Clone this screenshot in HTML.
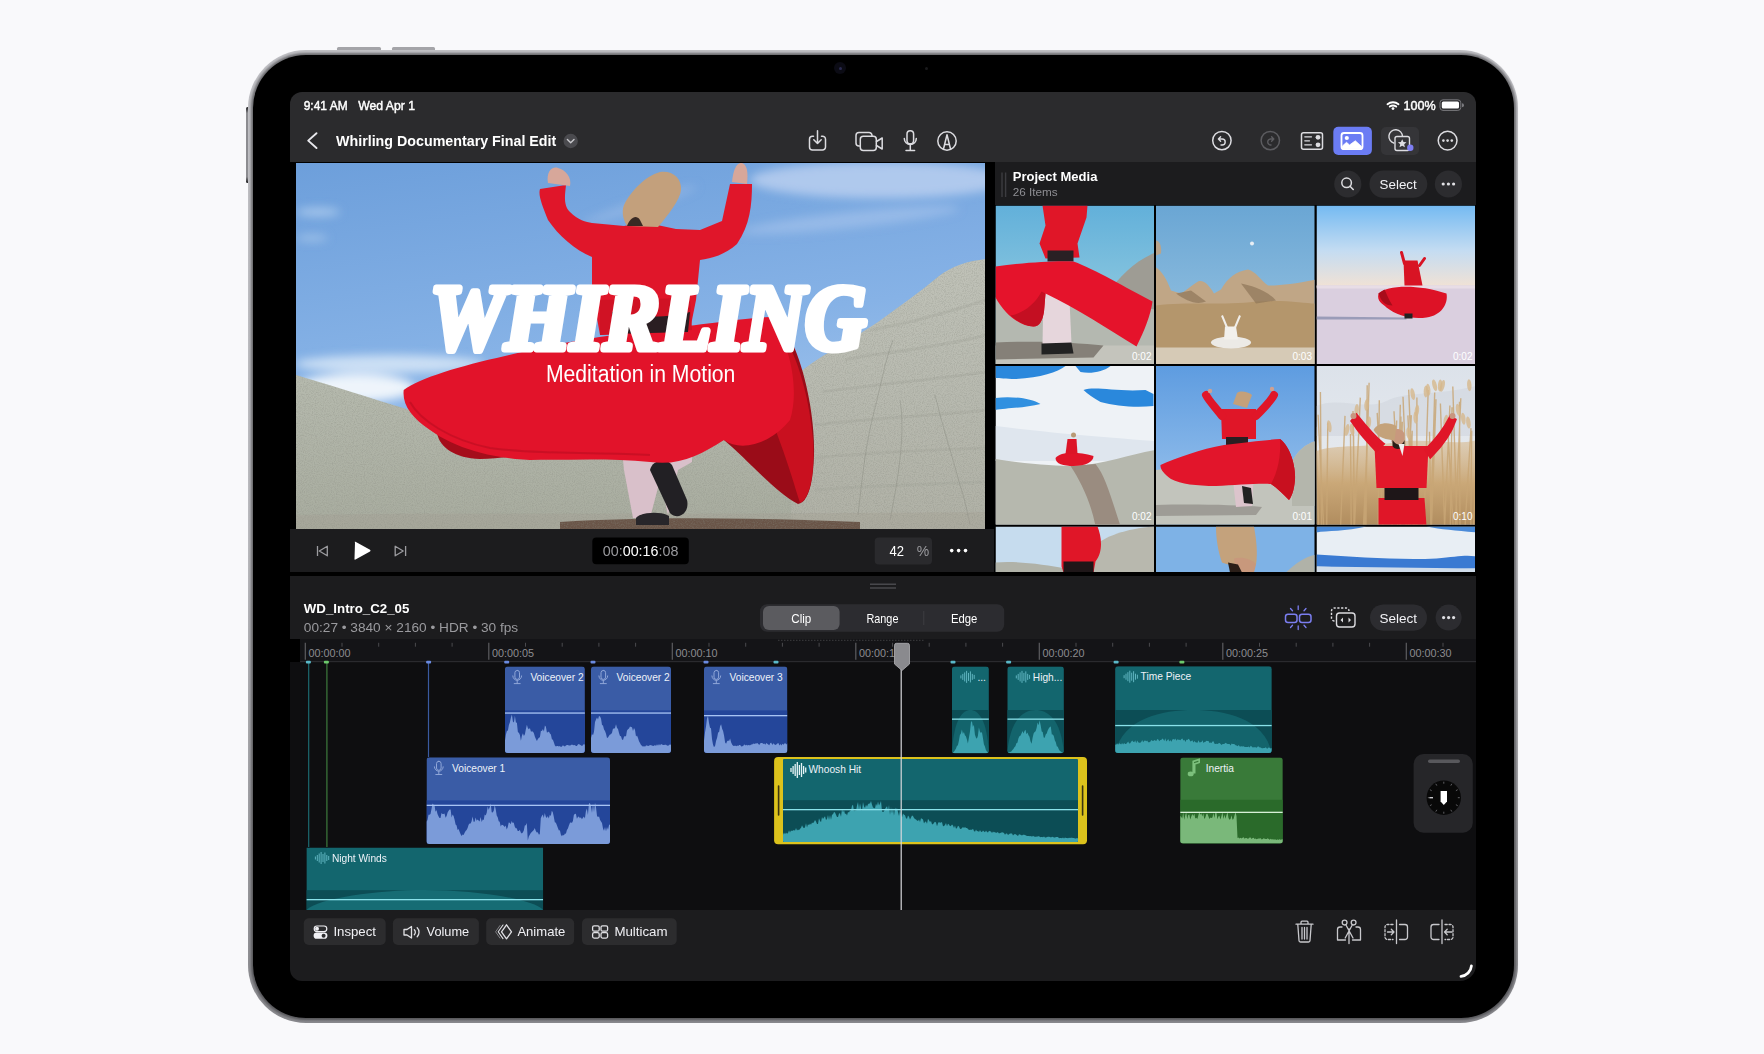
<!DOCTYPE html>
<html><head><meta charset="utf-8">
<style>
*{margin:0;padding:0;box-sizing:border-box}
html,body{width:1764px;height:1054px;overflow:hidden;background:#f9f9fb;font-family:"Liberation Sans",sans-serif;}
.a{position:absolute}
#frame{left:248px;top:49.5px;width:1270px;height:973px;border-radius:58px;background:linear-gradient(#c2c2c6,#bcbcc0 50%,#8a8a8e);}
#bezel{left:253px;top:54.5px;width:1260.5px;height:963.3px;border-radius:53px;background:#000;box-shadow:0 0 2.5px 1.5px rgba(50,50,54,0.6);}
#screen{left:290px;top:91.5px;width:1186px;height:889.5px;border-radius:12px 12px 16px 12px;background:#000;overflow:hidden}

</style></head><body>
<div class="a" style="left:337px;top:47px;width:44px;height:4px;border-radius:1.5px;background:#a4a4a8"></div>
<div class="a" style="left:392px;top:47px;width:43px;height:4px;border-radius:1.5px;background:#a4a4a8"></div>
<div class="a" style="left:246px;top:107.3px;width:3px;height:76px;border-radius:1.5px;background:linear-gradient(#1a1a1c,#8c8c90 8%,#8c8c90 92%,#1a1a1c)"></div>
<div id="frame" class="a"></div>
<div id="bezel" class="a"></div>
<div class="a" style="left:834px;top:62px;width:12px;height:12px;border-radius:6px;background:#0b0b14"></div>
<div class="a" style="left:838.5px;top:66.5px;width:3px;height:3px;border-radius:2px;background:#2a2a50"></div>
<div class="a" style="left:924.5px;top:67px;width:3px;height:3px;border-radius:2px;background:#1a1a1c"></div>

<div id="screen" class="a">
  <div class="a" style="left:0;top:0;width:1186px;height:70.5px;background:#2b2b2d"></div>
  <div class="a" style="left:0;top:437.5px;width:704px;height:43px;background:#1c1c1e"></div>
  <div class="a" style="left:705px;top:70.5px;width:481px;height:43px;background:#1c1c1e"></div>
  <div class="a" style="left:0;top:484.5px;width:1186px;height:63px;background:#1c1c1e"></div>
  <div class="a" style="left:10px;top:547.5px;width:1176px;height:23px;background:#141417"></div>
  <div class="a" style="left:0;top:570.5px;width:1186px;height:248px;background:#0e0e10"></div>
  <div class="a" style="left:0;top:818.5px;width:1186px;height:71px;background:#1c1c1e"></div>
</div>

<svg class="a" style="left:0;top:0" width="1764" height="1054" viewBox="0 0 1764 1054" font-family="Liberation Sans, sans-serif">
<!--PHOTOS-->
<g id="preview">
  <defs>
    <clipPath id="hillclip"><path d="M296,375 C330,385 370,398 410,410 C520,432 640,440 720,438 L800,420 L800,372 C820,356 845,344 878,322 C900,306 920,292 939,276 C952,266 968,261 986,259 L986,529 L296,529 Z"/></clipPath>
    <clipPath id="cpv"><rect x="296" y="163" width="689" height="366"/></clipPath>
    <filter id="noise" x="0" y="0" width="100%" height="100%"><feTurbulence type="fractalNoise" baseFrequency="0.9" numOctaves="2" seed="4"/><feColorMatrix type="matrix" values="0 0 0 0 0.25  0 0 0 0 0.26  0 0 0 0 0.22  0 0 0 -2.2 1.3"/><feComposite operator="in" in2="SourceGraphic"/></filter>
    <filter id="blur4" x="-50%" y="-50%" width="200%" height="200%"><feGaussianBlur stdDeviation="5"/></filter>
    <linearGradient id="skyv" x1="0" y1="0" x2="0.25" y2="1">
      <stop offset="0" stop-color="#6d9fdb"/>
      <stop offset="0.55" stop-color="#86b2e6"/>
      <stop offset="1" stop-color="#a9c9ef"/>
    </linearGradient>
    <linearGradient id="hillL" x1="0" y1="0" x2="0" y2="1">
      <stop offset="0" stop-color="#b6baae"/>
      <stop offset="1" stop-color="#a8ac9f"/>
    </linearGradient>
    <linearGradient id="hillR" x1="0" y1="0" x2="0" y2="1">
      <stop offset="0" stop-color="#c0c2b8"/>
      <stop offset="0.5" stop-color="#b8bab0"/>
      <stop offset="1" stop-color="#b0b1a6"/>
    </linearGradient>
  </defs>
  <g clip-path="url(#cpv)">
    <rect x="296" y="163" width="689" height="366" fill="url(#skyv)"/>
    <!-- clouds -->
    <g filter="url(#blur4)">
    <ellipse cx="390" cy="364" rx="95" ry="9" fill="#d4e4f6" opacity="0.9"/>
    <ellipse cx="355" cy="388" rx="60" ry="14" fill="#eef4fb"/>
    <ellipse cx="318" cy="212" rx="22" ry="4" fill="#b8d2f0" opacity="0.8"/>
    <ellipse cx="312" cy="238" rx="16" ry="3" fill="#b8d2f0" opacity="0.7"/>
    <ellipse cx="880" cy="180" rx="130" ry="18" fill="#c2d4f2" opacity="0.75"/>
    <ellipse cx="850" cy="220" rx="110" ry="8" fill="#a8c4ec" opacity="0.6" transform="rotate(-6 850 220)"/>
    <ellipse cx="640" cy="205" rx="60" ry="5" fill="#a6c2ea" opacity="0.5" transform="rotate(-18 640 205)"/>
    </g>
    <!-- left hill -->
    <path d="M296,375 C330,385 370,398 410,410 C520,432 640,440 720,438 L810,420 L810,529 L296,529 Z" fill="url(#hillL)"/>
    <!-- right hill -->
    <path d="M790,529 L800,372 C820,356 845,344 878,322 C900,306 920,292 939,276 C952,266 968,261 986,259 L986,529 Z" fill="url(#hillR)"/>
    <g stroke="#a2a49a" stroke-width="3" fill="none" opacity="0.3">
      <path d="M870,330 C900,325 930,318 986,300"/>
      <path d="M845,360 C880,352 930,350 986,335"/>
      <path d="M822,392 C870,385 930,380 986,372"/>
      <path d="M815,425 C870,418 930,416 986,410"/>
      <path d="M815,458 C870,452 930,450 986,448"/>
      <path d="M815,490 C870,486 930,484 986,482"/>
    </g>
    <g stroke="#7c7e74" stroke-width="1" fill="none" opacity="0.35">
      <path d="M893,340 C885,360 880,390 872,420 C865,450 862,480 858,515"/>
      <path d="M935,395 C942,425 952,455 960,485 C965,500 968,515 970,525"/>
      <path d="M900,400 C905,430 900,470 890,520"/>
    </g>
    <!-- ground -->
    <path d="M296,515 C450,512 700,515 985,512 L985,529 L296,529 Z" fill="#a39d92" opacity="0.35"/>
    <path d="M560,522 C650,516 760,518 860,522 L860,529 L560,529 Z" fill="#6a5548"/>
    <rect x="296" y="255" width="689" height="274" fill="#fff" filter="url(#noise)" opacity="0.35" clip-path="url(#hillclip)"/>
    <!-- back skirt right lobe (dark) -->
    <path d="M724,440 C750,462 775,492 798,504 C808,502 813,485 814,455 C815,420 806,370 790,338 C782,325 775,318 769,317 C745,340 725,370 700,400 Z" fill="#9a0c18"/>
    <path d="M769,317 C792,338 808,385 813,440 C815,475 810,498 800,503 C790,470 775,420 752,380 Z" fill="#c9101f"/>
    <!-- legs -->
    <path d="M619,420 L692,420 L692,462 L678,470 L668,515 L660,480 L650,518 L633,518 L624,470 Z" fill="#d9c0ca"/>
    <path d="M650,470 C652,460 666,457 672,465 L687,500 C690,513 678,521 670,513 Z" fill="#222024"/>
    <path d="M636,518 C640,512 662,511 669,516 L669,525 L636,525 Z" fill="#28262a"/>
    <!-- underside dark lobe left -->
    <path d="M437,433 C440,448 455,458 480,459 C500,459 520,455 540,452 L520,440 Z" fill="#a50d1b"/>
    <!-- front skirt -->
    <path d="M403.7,390 C420,378 460,366 505,356 C560,342 620,333 680,327 C720,322 750,318 769,317 C790,340 800,390 790,420 C770,445 740,452 724,440 C700,455 680,466 650,462 C610,458 570,460 530,460 C490,458 455,448 430,430 C412,418 402,405 403.7,390 Z" fill="#e2132a"/>
    <path d="M410,402 C420,420 450,440 490,448 C540,455 600,452 650,455" fill="none" stroke="#c00e22" stroke-width="2" opacity="0.7"/>
    <!-- torso and arms -->
    <path d="M592,223 L624,226 L643,222 L676,229 L700,230 L722,221 L730,184 L752,184 C752,205 750,225 737,244 C725,255 712,258 700,260 L696,300 L690,330 L600,335 L592,290 L592,257 C575,250 558,235 548,220 C542,205 538,195 540,189 L566,185 C565,195 563,205 570,212 C578,220 586,222 592,223 Z" fill="#e0162a"/>
    <path d="M600,300 L690,298 L692,330 L600,335 Z" fill="#d01224" />
    <path d="M612,312 C640,318 670,318 690,312 L688,332 L612,334 Z" fill="#2a1e22"/>
    <!-- hands -->
    <path d="M548,183 C546,172 552,166 558,168 C566,170 572,178 570,186 Z" fill="#d7a79a"/>
    <path d="M732,182 C733,170 737,162 742,163 C748,165 748,175 747,184 Z" fill="#d7a79a"/>
    <!-- hat -->
    <path d="M624,205 C630,192 645,176 660,172 C672,170 682,178 681,190 C680,200 668,215 658,227 L627,226 C622,218 622,210 624,205 Z" fill="#c3a07c"/>
    <path d="M627,226 C630,218 636,214 640,220 L643,226 Z" fill="#3a2a24"/>
  </g>
  <!-- title -->
  <text x="430" y="349" font-family="Liberation Serif" font-weight="bold" font-style="italic" font-size="94" fill="#fff" stroke="#fff" stroke-width="7" stroke-linejoin="round" textLength="436" lengthAdjust="spacingAndGlyphs">WHIRLING</text>
  <text x="545.9" y="382.2" font-size="23.5" fill="#fff" textLength="189.5" lengthAdjust="spacingAndGlyphs">Meditation in Motion</text>
</g>

<g id="thumbs">
  <defs>
    <clipPath id="ct1"><rect x="0" y="0" width="158.5" height="158.5"/></clipPath>
    <clipPath id="ct2"><rect x="0" y="0" width="158.5" height="158.5"/></clipPath>
    <clipPath id="ct3"><rect x="0" y="0" width="158.5" height="158.5"/></clipPath>
    <clipPath id="ct4"><rect x="0" y="0" width="158.5" height="158.5"/></clipPath>
    <clipPath id="ct5"><rect x="0" y="0" width="158.5" height="158.5"/></clipPath>
    <clipPath id="ct6"><rect x="0" y="0" width="158.5" height="158.5"/></clipPath>
    <clipPath id="ct7"><rect x="0" y="0" width="158.5" height="45.5"/></clipPath>
    <clipPath id="ct8"><rect x="0" y="0" width="158.5" height="45.5"/></clipPath>
    <clipPath id="ct9"><rect x="0" y="0" width="158.5" height="45.5"/></clipPath>
    <linearGradient id="sk1" x1="0" y1="0" x2="0" y2="1"><stop offset="0" stop-color="#62b0da"/><stop offset="1" stop-color="#a6d6e2"/></linearGradient>
    <linearGradient id="sk2" x1="0" y1="0" x2="0" y2="1"><stop offset="0" stop-color="#6aa6d4"/><stop offset="1" stop-color="#9cc6e2"/></linearGradient>
    <linearGradient id="sk3" x1="0" y1="0" x2="0" y2="1"><stop offset="0" stop-color="#74baf2"/><stop offset="0.55" stop-color="#c4dcf2"/><stop offset="1" stop-color="#f2e2d4"/></linearGradient>
    <linearGradient id="sk5" x1="0" y1="0" x2="0" y2="1"><stop offset="0" stop-color="#5e9ce0"/><stop offset="1" stop-color="#a2c8ee"/></linearGradient>
    <linearGradient id="sk6" x1="0" y1="0" x2="0" y2="1"><stop offset="0" stop-color="#dce2ea"/><stop offset="1" stop-color="#eceef0"/></linearGradient>
    <linearGradient id="reed" x1="0" y1="0" x2="0" y2="1"><stop offset="0" stop-color="#d8bc94" stop-opacity="0.6"/><stop offset="0.5" stop-color="#caa878"/><stop offset="1" stop-color="#b08c5e"/></linearGradient>
  </defs>
  <!-- T1 -->
  <g clip-path="url(#ct1)" transform="translate(995.5,205.5)">
    <rect width="160" height="160" fill="url(#sk1)"/>
    <path d="M110,90 C125,70 140,55 160,47 L160,160 L110,160 Z" fill="#9e9c94"/>
    <path d="M0,92 C40,94 90,98 160,104 L160,160 L0,160 Z" fill="#b4b8b0"/>
    <path d="M0,140 L160,140 L160,160 L0,160 Z" fill="#c4c4bc"/>
    <path d="M0,137 C40,135 80,137 108,140 L98,152 L0,154 Z" fill="#858078"/>
    <path d="M47,0 L92,0 L91,12 L82,38 L84,52 L50,53 L44,38 L50,20 Z" fill="#e01628"/>
    <path d="M52,45 L78,45 L78,56 L52,56 Z" fill="#2a2024"/>
    <path d="M48,86 L74,95 L76,138 L47,139 Z" fill="#e6d6dc"/>
    <path d="M46,138 L76,137 L78,148 L46,149 Z" fill="#222"/>
    <path d="M0,61 C30,57 60,55 78,56 C100,64 130,82 157,96 C155,110 149,125 141,141 C115,125 80,102 50,88 L48.5,106 C47,115 44,121 38,121 C25,121 10,110 0,92 Z" fill="#e5132b"/>
    <path d="M50,88 L48.5,106 C47,115 44,121 38,121 C30,121 22,116 15,110 C28,108 40,98 46,86 Z" fill="#c40f22"/>
    <text x="156" y="154" font-size="10" fill="#fff" text-anchor="end">0:02</text>
  </g>
  <!-- T2 -->
  <g clip-path="url(#ct2)" transform="translate(1156,205.5)">
    <rect width="160" height="160" fill="url(#sk2)"/>
    <circle cx="96" cy="38" r="2" fill="#e8eef4"/>
    <path d="M0,35 C3,35 6,40 5,48 L0,50 Z" fill="#b8a48c"/>
    <path d="M0,62 C5,65 10,72 15,85 L25,88 C30,85 35,80 42,76 C48,74 53,80 58,88 L65,84 C72,72 80,66 92,64 C100,66 105,75 112,80 C125,80 140,78 160,74 L160,160 L0,160 Z" fill="#c0a686"/>
    <path d="M0,100 C30,96 70,100 100,96 C130,94 150,98 160,98 L160,148 L0,148 Z" fill="#b4966c"/>
    <path d="M0,142 L160,142 L160,160 L0,160 Z" fill="#d6cab6"/>
    <path d="M85,78 C95,80 110,84 120,95 L100,98 Z M20,88 C30,95 40,100 50,96 L35,85 Z" fill="#8e7658" opacity="0.7"/>
    <ellipse cx="75" cy="137" rx="20" ry="6" fill="#eceae6"/>
    <path d="M69,121 L80,121 L82,134 L68,134 Z" fill="#f2f0ec"/>
    <path d="M66,110 L71,122 M84,110 L79,122" stroke="#f0eeea" stroke-width="2"/>
    <text x="156" y="154" font-size="10" fill="#fff" text-anchor="end">0:03</text>
  </g>
  <!-- T3 -->
  <g clip-path="url(#ct3)" transform="translate(1316.5,205.5)">
    <rect width="160" height="82" fill="url(#sk3)"/>
    <rect y="80" width="160" height="80" fill="#dacfdf"/>
    <rect y="80" width="160" height="3" fill="#e8dde6"/>
    <path d="M0,111 L90,112 L90,114 L0,114 Z" fill="#9a9cb8"/>
    <path d="M87,55 L101,55 L106,80 L88,80 Z" fill="#d81424"/>
    <path d="M88,58 L85,47 M103,60 L108,53" stroke="#d81424" stroke-width="3" stroke-linecap="round"/>
    <path d="M62,88 C70,80 100,78 130,88 C132,98 125,110 110,112 C95,114 80,110 70,102 C66,98 60,96 62,88 Z" fill="#dd1226"/>
    <path d="M62,88 C65,96 68,100 76,100 C72,94 70,88 68,84 Z" fill="#a80c1a"/>
    <path d="M88,108 L96,108 L96,113 L88,113 Z" fill="#222"/>
    <text x="156" y="154" font-size="10" fill="#fff" text-anchor="end">0:02</text>
  </g>
  <!-- T4 -->
  <g clip-path="url(#ct4)" transform="translate(995.5,366)">
    <rect width="160" height="160" fill="#eef2f6"/>
    <path d="M0,0 L70,0 C62,6 45,12 20,13 C10,13 4,12 0,12 Z M80,0 L115,0 C108,6 95,8 85,6 Z" fill="#2b88dc"/>
    <path d="M0,32 C15,30 35,32 45,38 C30,42 10,42 0,44 Z" fill="#3090e0"/>
    <path d="M88,24 C100,20 120,26 150,24 L158,28 L158,40 C140,42 120,40 105,36 C98,32 92,28 88,24 Z" fill="#2a88dc"/>
    <path d="M0,60 C40,65 90,70 160,75 L160,95 L0,95 Z" fill="#dfe6ee"/>
    <path d="M0,93 C30,98 60,100 80,100 C110,98 135,88 160,84 L160,160 L0,160 Z" fill="#b6b8ae"/>
    <path d="M75,100 C85,115 95,135 100,160 L125,160 C115,130 110,110 100,98 Z" fill="#9a8c80"/>
    <path d="M60,92 C65,86 80,85 98,90 C98,96 90,100 78,100 C68,100 60,98 60,92 Z" fill="#e01428"/>
    <path d="M72,73 L81,73 L82,88 L70,88 Z" fill="#dc1426"/>
    <circle cx="78" cy="69" r="2.5" fill="#b89a74"/>
    <text x="156" y="154" font-size="10" fill="#fff" text-anchor="end">0:02</text>
  </g>
  <!-- T5 -->
  <g clip-path="url(#ct5)" transform="translate(1156,366)">
    <rect width="160" height="160" fill="url(#sk5)"/>
    <path d="M0,104 C40,100 100,104 136,96 C142,84 150,78 160,75 L160,160 L0,160 Z" fill="#c2c4bc"/>
    <path d="M136,96 C142,84 150,78 160,75 L160,140 L136,140 Z" fill="#b4b6ac"/>
    <path d="M0,139 C40,138 80,139 106,141 L100,149 L0,150 Z" fill="#8e8c86" opacity="0.7"/>
    <path d="M76,106 L98,106 L96,140 L80,141 Z" fill="#dcc4cc"/>
    <path d="M86,120 L95,122 L97,138 L88,137 Z" fill="#222"/>
    <path d="M65,43 L100,43 L100,73 L66,73 Z" fill="#e01628"/>
    <path d="M66,50 C60,42 53,35 50,29 M100,50 C108,42 115,35 118,29" fill="none" stroke="#e01628" stroke-width="8" stroke-linecap="round"/>
    <circle cx="54" cy="25" r="2.2" fill="#d0a090"/><circle cx="116" cy="23" r="2.2" fill="#d0a090"/>
    <path d="M77,38 L81,27 C85,24 92,26 96,29 L91,42 Z" fill="#c4a07a"/>
    <path d="M70,71 L92,71 L92,79 L70,79 Z" fill="#2a1e22"/>
    <path d="M4.5,99 C20,92 45,83 68,79 C90,76 110,74 124,73 C134,80 140,100 139,114 C138,124 136,130 133,134 C127,128 121,122 115,118 C105,117 80,119 60,120 C40,120 25,118 15,113 C8,108 4,103 4.5,99 Z" fill="#e2152b"/>
    <path d="M124,73 C134,80 140,100 139,114 C138,124 136,130 133,134 C127,128 121,122 115,118 C122,105 125,90 124,73 Z" fill="#c8101f"/>
    <text x="156" y="154" font-size="10" fill="#fff" text-anchor="end">0:01</text>
  </g>
  <!-- T6 -->
  <g clip-path="url(#ct6)" transform="translate(1316.5,366)">
    <rect width="160" height="160" fill="url(#sk6)"/>
    <path d="M0,40 C20,30 50,45 70,35 C90,25 120,30 160,20 L160,70 L0,70 Z" fill="#d0d6de" opacity="0.6"/>
    <path d="M0,160 L0,85 C20,78 50,82 80,76 C110,72 140,80 160,74 L160,160 Z" fill="url(#reed)"/>
    <g stroke="#c8a676" stroke-width="1.4" fill="none" opacity="0.85"><path d="M38.1,160 Q37.3,102.5 36.5,44.9 M96.6,160 Q94.0,104.7 91.4,49.4 M2.1,160 Q0.7,110.5 -0.8,61.1 M37.5,160 Q37.3,114.9 37.1,69.8 M133.8,160 Q134.7,100.6 135.5,41.2 M24.1,160 Q26.3,105.0 28.5,49.9 M83.7,160 Q84.7,107.9 85.8,55.8 M10.2,160 Q10.8,108.4 11.3,56.7 M48.2,160 Q50.4,88.4 52.6,16.7 M75.6,160 Q77.9,107.3 80.2,54.5 M114.3,160 Q113.6,112.8 113.0,65.7 M128.1,160 Q130.8,99.7 133.4,39.5 M140.6,160 Q138.4,90.2 136.3,20.4 M34.7,160 Q34.3,114.1 34.0,68.1 M100.3,160 Q100.3,95.8 100.4,31.6 M61.7,160 Q62.2,97.2 62.8,34.3 M93.5,160 Q94.6,112.4 95.7,64.7 M148.6,160 Q151.6,111.1 154.5,62.1 M107.4,160 Q109.6,92.0 111.7,24.0 M154.3,160 Q154.8,112.4 155.2,64.8 M114.2,160 Q116.2,93.3 118.2,26.6 M91.8,160 Q89.1,95.3 86.5,30.7 M136.6,160 Q134.2,114.7 131.7,69.4 M128.1,160 Q126.0,98.8 123.9,37.6 M47.0,160 Q49.3,108.6 51.5,57.3 M7.1,160 Q4.3,104.4 1.6,48.8 M115.0,160 Q117.2,96.6 119.5,33.2 M156.9,160 Q159.9,101.4 162.9,42.8 M49.5,160 Q50.1,89.6 50.7,19.2 M5.0,160 Q4.5,92.9 3.9,25.9 M97.7,160 Q94.9,91.8 92.2,23.6 M138.8,160 Q141.6,96.1 144.3,32.3 M143.5,160 Q143.2,97.9 143.0,35.8 M83.2,160 Q83.8,105.2 84.4,50.4 M89.5,160 Q92.1,104.6 94.8,49.1 M81.1,160 Q82.4,99.4 83.8,38.7 M38.0,160 Q40.9,95.8 43.8,31.6 M83.4,160 Q80.4,102.6 77.5,45.2 M66.4,160 Q63.6,103.4 60.7,46.9 M98.5,160 Q95.9,104.9 93.2,49.8"/></g>
    <ellipse cx="100.4" cy="44.6" rx="2.2" ry="6" fill="#d6b88c" opacity="0.8" transform="rotate(6 100.4 44.6)"/>
    <ellipse cx="146.8" cy="52.7" rx="2.2" ry="6" fill="#d6b88c" opacity="0.8" transform="rotate(-7 146.8 52.7)"/>
    <ellipse cx="118.1" cy="19.3" rx="2.2" ry="6" fill="#d6b88c" opacity="0.8" transform="rotate(-14 118.1 19.3)"/>
    <ellipse cx="152.8" cy="19.2" rx="2.2" ry="6" fill="#d6b88c" opacity="0.8" transform="rotate(-4 152.8 19.2)"/>
    <ellipse cx="40.2" cy="44.0" rx="2.2" ry="6" fill="#d6b88c" opacity="0.8" transform="rotate(3 40.2 44.0)"/>
    <ellipse cx="96.2" cy="28.1" rx="2.2" ry="6" fill="#d6b88c" opacity="0.8" transform="rotate(-10 96.2 28.1)"/>
    <ellipse cx="50.0" cy="39.0" rx="2.2" ry="6" fill="#d6b88c" opacity="0.8" transform="rotate(4 50.0 39.0)"/>
    <ellipse cx="42.3" cy="62.9" rx="2.2" ry="6" fill="#d6b88c" opacity="0.8" transform="rotate(-12 42.3 62.9)"/>
    <ellipse cx="123.6" cy="19.5" rx="2.2" ry="6" fill="#d6b88c" opacity="0.8" transform="rotate(3 123.6 19.5)"/>
    <ellipse cx="109.4" cy="25.5" rx="2.2" ry="6" fill="#d6b88c" opacity="0.8" transform="rotate(1 109.4 25.5)"/>
    <ellipse cx="35.6" cy="63.8" rx="2.2" ry="6" fill="#d6b88c" opacity="0.8" transform="rotate(-8 35.6 63.8)"/>
    <ellipse cx="52.4" cy="56.6" rx="2.2" ry="6" fill="#d6b88c" opacity="0.8" transform="rotate(5 52.4 56.6)"/>
    <ellipse cx="111.7" cy="23.8" rx="2.2" ry="6" fill="#d6b88c" opacity="0.8" transform="rotate(-5 111.7 23.8)"/>
    <ellipse cx="151.9" cy="56.5" rx="2.2" ry="6" fill="#d6b88c" opacity="0.8" transform="rotate(-8 151.9 56.5)"/>
    <ellipse cx="70.1" cy="66.8" rx="2.2" ry="6" fill="#d6b88c" opacity="0.8" transform="rotate(-10 70.1 66.8)"/>
    <ellipse cx="12.8" cy="60.3" rx="2.2" ry="6" fill="#d6b88c" opacity="0.8" transform="rotate(-9 12.8 60.3)"/>
    <ellipse cx="141.6" cy="43.7" rx="2.2" ry="6" fill="#d6b88c" opacity="0.8" transform="rotate(-8 141.6 43.7)"/>
    <ellipse cx="125.9" cy="19.9" rx="2.2" ry="6" fill="#d6b88c" opacity="0.8" transform="rotate(15 125.9 19.9)"/>
    <ellipse cx="30.5" cy="64.0" rx="2.2" ry="6" fill="#d6b88c" opacity="0.8" transform="rotate(11 30.5 64.0)"/>
    <ellipse cx="92.0" cy="67.2" rx="2.2" ry="6" fill="#d6b88c" opacity="0.8" transform="rotate(-5 92.0 67.2)"/>
    <ellipse cx="129.2" cy="54.6" rx="2.2" ry="6" fill="#d6b88c" opacity="0.8" transform="rotate(10 129.2 54.6)"/>
    <ellipse cx="99.1" cy="51.6" rx="2.2" ry="6" fill="#d6b88c" opacity="0.8" transform="rotate(-2 99.1 51.6)"/>
    <path d="M62,132 L108,132 L110,160 L62,160 Z" fill="#e01628"/>
    <path d="M68,120 L102,120 L102,134 L68,134 Z" fill="#1e1618"/>
    <path d="M58,80 L112,80 L110,122 L60,122 Z" fill="#e2182a"/>
    <path d="M60,84 C50,74 42,64 36,55 L40,50 C48,60 56,70 66,78 Z M110,84 C120,74 128,64 134,52 L138,54 C134,66 126,78 114,90 Z" fill="#e01628" stroke="#e01628" stroke-width="4"/>
    <circle cx="37" cy="50" r="3" fill="#c89680"/><circle cx="136" cy="50" r="3" fill="#c89680"/>
    <path d="M75,65 C78,62 86,62 88,68 L88,76 C84,80 78,80 75,76 Z" fill="#c8987e"/>
    <path d="M76,74 C80,80 86,80 88,74 L88,80 C84,84 78,84 76,80 Z" fill="#2a1e18"/>
    <path d="M57,64 C62,56 72,56 80,60 L78,74 C70,74 62,72 57,64 Z" fill="#c4a27a"/>
    <path d="M82,78 L88,78 L86,90 Z" fill="#f0f0f0"/>
    <text x="156" y="154" font-size="10" fill="#fff" text-anchor="end">0:10</text>
  </g>
  <!-- T7 -->
  <g clip-path="url(#ct7)" transform="translate(995.5,526.5)">
    <rect width="160" height="46" fill="#c6dcee"/>
    <path d="M95,46 L98,20 C110,10 130,2 160,0 L160,46 Z" fill="#b8b8ae"/>
    <path d="M0,36 C20,34 50,38 70,42 L70,46 L0,46 Z" fill="#b0b2a8"/>
    <path d="M66,0 L102,0 C106,10 108,25 100,35 L98,46 L68,46 L66,40 Z" fill="#e01628"/>
    <path d="M68,35 L98,35 L98,46 L68,46 Z" fill="#1e1618"/>
  </g>
  <!-- T8 -->
  <g clip-path="url(#ct8)" transform="translate(1156,526.5)">
    <rect width="160" height="46" fill="#7eb2e6"/>
    <path d="M130,46 C140,36 150,30 160,28 L160,46 Z" fill="#b0b2a8"/>
    <path d="M60,0 L98,0 C100,12 102,25 100,38 C90,40 75,40 66,36 C62,25 60,12 60,0 Z" fill="#c4a27c"/>
    <path d="M78,32 C85,30 96,32 100,38 L98,46 L80,46 Z" fill="#c8987c"/>
    <path d="M72,36 L82,38 L86,46 L74,46 Z" fill="#2a1e18"/>
  </g>
  <!-- T9 -->
  <g clip-path="url(#ct9)" transform="translate(1316.5,526.5)">
    <rect width="160" height="46" fill="#e8eef4"/>
    <path d="M0,0 L50,0 C30,5 10,4 0,6 Z M110,0 L160,0 L160,6 C140,4 125,3 110,0 Z" fill="#4a8ad8"/>
    <path d="M0,28 C40,30 80,34 120,32 C140,30 150,28 160,30 L160,42 C120,44 60,42 0,40 Z" fill="#3a7ad2"/>
    <path d="M0,40 L160,42 L160,46 L0,46 Z" fill="#cfdcea"/>
  </g>
</g>

<g id="timeline">
<path d="M778,640.3 H924" stroke="#3c3c40" stroke-width="1" stroke-dasharray="1.5 1.5"/>
<path d="M305.3,642.8 V659.7 M488.8,642.8 V659.7 M672.3,642.8 V659.7 M855.8,642.8 V659.7 M1039.3,642.8 V659.7 M1222.8,642.8 V659.7 M1406.3,642.8 V659.7" stroke="#5c5c60" stroke-width="1.2"/>
<path d="M342.0,642.8 V646.7 M378.7,642.8 V646.7 M415.4,642.8 V646.7 M452.1,642.8 V646.7 M525.5,642.8 V646.7 M562.2,642.8 V646.7 M598.9,642.8 V646.7 M635.6,642.8 V646.7 M709.0,642.8 V646.7 M745.7,642.8 V646.7 M782.4,642.8 V646.7 M819.1,642.8 V646.7 M892.5,642.8 V646.7 M929.2,642.8 V646.7 M965.9,642.8 V646.7 M1002.6,642.8 V646.7 M1076.0,642.8 V646.7 M1112.7,642.8 V646.7 M1149.4,642.8 V646.7 M1186.1,642.8 V646.7 M1259.5,642.8 V646.7 M1296.2,642.8 V646.7 M1332.9,642.8 V646.7 M1369.6,642.8 V646.7 M1443.0,642.8 V646.7" stroke="#4a4a4e" stroke-width="1"/>
<g fill="#8c8c90" font-size="10.2">
<text x="308.4" y="657.4" textLength="42.1" lengthAdjust="spacingAndGlyphs">00:00:00</text>
<text x="491.9" y="657.4" textLength="42.1" lengthAdjust="spacingAndGlyphs">00:00:05</text>
<text x="675.4" y="657.4" textLength="42.1" lengthAdjust="spacingAndGlyphs">00:00:10</text>
<text x="858.9" y="657.4" textLength="42.1" lengthAdjust="spacingAndGlyphs">00:00:15</text>
<text x="1042.4" y="657.4" textLength="42.1" lengthAdjust="spacingAndGlyphs">00:00:20</text>
<text x="1225.9" y="657.4" textLength="42.1" lengthAdjust="spacingAndGlyphs">00:00:25</text>
<text x="1409.4" y="657.4" textLength="42.1" lengthAdjust="spacingAndGlyphs">00:00:30</text>
</g>
<rect x="300" y="661" width="1176" height="1.2" fill="#2a2a2e"/>
<path d="M308.7,662 V847" stroke="#1c6a70" stroke-width="1.2"/>
<path d="M326.9,662 V847" stroke="#3c7a3c" stroke-width="1.2"/>
<path d="M428.5,662 V757" stroke="#3a5aa0" stroke-width="1.2"/>
<rect x="305.9" y="660.8" width="5" height="2.6" rx="1" fill="#5ab8c8"/>
<rect x="323.9" y="660.8" width="5" height="2.6" rx="1" fill="#6cc86c"/>
<rect x="426.1" y="660.8" width="5" height="2.6" rx="1" fill="#6a8ae0"/>
<rect x="504.2" y="660.8" width="5" height="2.6" rx="1" fill="#6a8ae0"/>
<rect x="590.5" y="660.8" width="5" height="2.6" rx="1" fill="#6a8ae0"/>
<rect x="703.5" y="660.8" width="5" height="2.6" rx="1" fill="#6a8ae0"/>
<rect x="773.5" y="660.8" width="5" height="2.6" rx="1" fill="#5ab8c8"/>
<rect x="950.5" y="660.8" width="5" height="2.6" rx="1" fill="#5ab8c8"/>
<rect x="1006.1" y="660.8" width="5" height="2.6" rx="1" fill="#5ab8c8"/>
<rect x="1113.6" y="660.8" width="5" height="2.6" rx="1" fill="#5ab8c8"/>
<rect x="1179.4" y="660.8" width="5" height="2.6" rx="1" fill="#6cc86c"/>
<clipPath id="c1"><rect x="504.9" y="666.4" width="80.0" height="86.6" rx="3"/></clipPath>
<g clip-path="url(#c1)">
<rect x="504.9" y="666.4" width="80.0" height="86.6" fill="#3a5ca6"/>
<rect x="504.9" y="710.4" width="80.0" height="42.6" fill="#24469a"/>

<path d="M504.9,753.0 L504.9,741.2 L505.9,734.5 L506.9,730.9 L507.9,730.4 L508.9,725.0 L509.9,722.2 L510.9,717.6 L511.9,714.5 L512.9,721.4 L513.9,722.6 L514.9,715.8 L515.9,722.4 L516.9,722.8 L517.9,732.3 L518.9,732.8 L519.9,735.1 L520.9,740.8 L521.9,735.7 L522.9,733.3 L523.9,736.0 L524.9,734.3 L525.9,729.1 L526.9,724.8 L527.9,728.2 L528.9,729.2 L529.9,727.9 L530.9,731.6 L531.9,731.4 L532.9,731.6 L533.9,733.2 L534.9,736.8 L535.9,739.0 L536.9,741.1 L537.9,739.1 L538.9,737.8 L539.9,737.3 L540.9,730.8 L541.9,730.9 L542.9,729.0 L543.9,731.5 L544.9,725.5 L545.9,726.7 L546.9,732.6 L547.9,732.3 L548.9,731.5 L549.9,733.5 L550.9,734.6 L551.9,739.2 L552.9,739.8 L553.9,742.5 L554.9,745.4 L555.9,746.4 L556.9,746.1 L557.9,746.0 L558.9,746.5 L559.9,746.1 L560.9,747.1 L561.9,746.6 L562.9,745.3 L563.9,746.0 L564.9,746.4 L565.9,745.5 L566.9,745.0 L567.9,745.0 L568.9,745.6 L569.9,745.4 L570.9,745.2 L571.9,744.5 L572.9,745.0 L573.9,745.3 L574.9,745.0 L575.9,746.1 L576.9,746.1 L577.9,744.5 L578.9,743.9 L579.9,744.8 L580.9,745.3 L581.9,745.9 L582.9,745.2 L583.9,744.1 L584.9,744.7 L584.9,753.0 Z" fill="#7b9bd9"/>
<rect x="504.9" y="712.4" width="80.0" height="1.3" fill="#a8c4f4"/>
</g>
<g fill="none" stroke="#8fa6d8" stroke-width="1" stroke-linecap="round"><rect x="514.9" y="670.4" width="4.6" height="9" rx="2.3"/><path d="M512.8,675.9 a4.4,4.4 0 0 0 8.8,0 M517.2,680.4 v3 M514.2,683.6 h6"/></g>
<text x="530.4" y="680.6" font-size="10.2" fill="#eef2f8">Voiceover 2</text>
<clipPath id="c2"><rect x="591.0" y="666.4" width="80.0" height="86.6" rx="3"/></clipPath>
<g clip-path="url(#c2)">
<rect x="591.0" y="666.4" width="80.0" height="86.6" fill="#3a5ca6"/>
<rect x="591.0" y="710.4" width="80.0" height="42.6" fill="#24469a"/>

<path d="M591.0,753.0 L591.0,737.9 L592.0,734.0 L593.0,735.2 L594.0,731.7 L595.0,722.1 L596.0,719.5 L597.0,717.5 L598.0,719.6 L599.0,715.9 L600.0,716.4 L601.0,718.4 L602.0,724.9 L603.0,725.5 L604.0,729.4 L605.0,731.1 L606.0,733.8 L607.0,738.0 L608.0,737.5 L609.0,735.7 L610.0,734.6 L611.0,734.2 L612.0,732.8 L613.0,728.4 L614.0,728.7 L615.0,727.9 L616.0,724.3 L617.0,727.9 L618.0,729.0 L619.0,732.9 L620.0,736.0 L621.0,736.3 L622.0,739.4 L623.0,740.0 L624.0,736.8 L625.0,735.9 L626.0,736.4 L627.0,730.4 L628.0,729.3 L629.0,728.4 L630.0,726.4 L631.0,727.1 L632.0,727.2 L633.0,731.0 L634.0,728.1 L635.0,730.0 L636.0,736.6 L637.0,735.5 L638.0,738.0 L639.0,741.2 L640.0,742.9 L641.0,744.9 L642.0,745.7 L643.0,746.8 L644.0,746.0 L645.0,746.8 L646.0,745.6 L647.0,745.4 L648.0,746.1 L649.0,745.8 L650.0,744.9 L651.0,745.2 L652.0,745.6 L653.0,746.1 L654.0,745.8 L655.0,744.9 L656.0,746.0 L657.0,744.2 L658.0,745.7 L659.0,744.1 L660.0,745.5 L661.0,743.9 L662.0,744.5 L663.0,745.0 L664.0,745.0 L665.0,744.7 L666.0,744.8 L667.0,745.5 L668.0,745.8 L669.0,745.2 L670.0,744.2 L671.0,745.0 L671.0,753.0 Z" fill="#7b9bd9"/>
<rect x="591.0" y="712.4" width="80.0" height="1.3" fill="#a8c4f4"/>
</g>
<g fill="none" stroke="#8fa6d8" stroke-width="1" stroke-linecap="round"><rect x="601.0" y="670.4" width="4.6" height="9" rx="2.3"/><path d="M598.9,675.9 a4.4,4.4 0 0 0 8.8,0 M603.3,680.4 v3 M600.3,683.6 h6"/></g>
<text x="616.5" y="680.6" font-size="10.2" fill="#eef2f8">Voiceover 2</text>
<clipPath id="c3"><rect x="704.0" y="666.4" width="83.4" height="86.6" rx="3"/></clipPath>
<g clip-path="url(#c3)">
<rect x="704.0" y="666.4" width="83.4" height="86.6" fill="#3a5ca6"/>
<rect x="704.0" y="710.4" width="83.4" height="42.6" fill="#24469a"/>

<path d="M704.0,753.0 L704.0,740.8 L705.0,732.5 L706.0,726.5 L707.0,718.6 L708.0,715.7 L709.0,723.0 L710.0,727.8 L711.0,728.3 L712.0,738.9 L713.0,744.5 L714.0,747.3 L715.1,745.7 L716.1,740.8 L717.1,737.7 L718.1,732.4 L719.1,732.0 L720.1,726.3 L721.1,724.3 L722.1,728.8 L723.1,730.9 L724.1,735.8 L725.1,742.6 L726.1,743.7 L727.1,741.3 L728.1,740.4 L729.1,741.0 L730.1,738.5 L731.1,742.3 L732.1,744.5 L733.1,745.7 L734.1,745.9 L735.1,745.4 L736.2,746.3 L737.2,745.4 L738.2,746.0 L739.2,744.9 L740.2,744.9 L741.2,746.5 L742.2,746.3 L743.2,746.1 L744.2,744.2 L745.2,745.4 L746.2,744.8 L747.2,745.5 L748.2,745.0 L749.2,745.2 L750.2,745.2 L751.2,744.5 L752.2,744.5 L753.2,743.6 L754.2,744.1 L755.2,743.4 L756.3,743.5 L757.3,743.1 L758.3,743.9 L759.3,745.1 L760.3,743.3 L761.3,742.9 L762.3,743.1 L763.3,743.9 L764.3,743.5 L765.3,744.8 L766.3,743.1 L767.3,743.8 L768.3,744.6 L769.3,745.2 L770.3,743.0 L771.3,742.7 L772.3,745.1 L773.3,743.2 L774.3,744.3 L775.3,745.0 L776.3,744.6 L777.4,743.4 L778.4,743.1 L779.4,745.4 L780.4,743.9 L781.4,745.4 L782.4,743.7 L783.4,744.8 L784.4,743.4 L785.4,743.2 L786.4,744.5 L787.4,743.3 L787.4,753.0 Z" fill="#7b9bd9"/>
<rect x="704.0" y="715.0" width="83.4" height="1.3" fill="#a8c4f4"/>
</g>
<g fill="none" stroke="#8fa6d8" stroke-width="1" stroke-linecap="round"><rect x="714.0" y="670.4" width="4.6" height="9" rx="2.3"/><path d="M711.9,675.9 a4.4,4.4 0 0 0 8.8,0 M716.3,680.4 v3 M713.3,683.6 h6"/></g>
<text x="729.5" y="680.6" font-size="10.2" fill="#eef2f8">Voiceover 3</text>
<clipPath id="c4"><rect x="426.5" y="757.3" width="183.5" height="86.6" rx="3"/></clipPath>
<g clip-path="url(#c4)">
<rect x="426.5" y="757.3" width="183.5" height="86.6" fill="#3a5ca6"/>
<rect x="426.5" y="800.4" width="183.5" height="43.5" fill="#24469a"/>

<path d="M426.5,843.9 L426.5,821.8 L427.5,820.0 L428.5,814.8 L429.5,814.8 L430.5,813.9 L431.5,809.1 L432.5,803.4 L433.5,804.7 L434.5,805.0 L435.5,811.8 L436.5,809.9 L437.5,813.9 L438.5,816.3 L439.5,818.1 L440.5,818.1 L441.5,812.9 L442.5,813.9 L443.5,813.9 L444.5,813.4 L445.6,817.8 L446.6,816.0 L447.6,812.4 L448.6,810.8 L449.6,809.5 L450.6,809.6 L451.6,817.6 L452.6,814.4 L453.6,815.9 L454.6,819.7 L455.6,824.5 L456.6,825.4 L457.6,830.1 L458.6,829.0 L459.6,831.7 L460.6,834.3 L461.6,835.9 L462.6,834.6 L463.6,834.9 L464.6,832.7 L465.6,830.9 L466.6,830.0 L467.6,828.1 L468.6,824.8 L469.6,823.6 L470.6,823.6 L471.6,821.2 L472.6,816.5 L473.6,821.8 L474.6,821.7 L475.6,817.6 L476.6,820.7 L477.6,819.4 L478.6,820.4 L479.6,821.6 L480.6,817.0 L481.7,822.1 L482.7,819.6 L483.7,819.9 L484.7,814.6 L485.7,815.6 L486.7,812.8 L487.7,806.6 L488.7,809.8 L489.7,807.3 L490.7,803.5 L491.7,812.2 L492.7,812.6 L493.7,810.8 L494.7,805.0 L495.7,809.0 L496.7,815.4 L497.7,817.3 L498.7,821.2 L499.7,821.8 L500.7,826.6 L501.7,824.7 L502.7,825.1 L503.7,825.7 L504.7,826.9 L505.7,825.5 L506.7,829.5 L507.7,827.3 L508.7,822.6 L509.7,822.8 L510.7,824.3 L511.7,820.9 L512.7,823.0 L513.7,822.5 L514.7,826.5 L515.7,828.2 L516.7,828.2 L517.7,830.9 L518.8,831.0 L519.8,829.7 L520.8,832.4 L521.8,833.4 L522.8,832.5 L523.8,830.6 L524.8,825.6 L525.8,825.2 L526.8,822.9 L527.8,840.4 L528.8,836.4 L529.8,834.7 L530.8,833.1 L531.8,832.0 L532.8,831.0 L533.8,830.1 L534.8,827.9 L535.8,830.9 L536.8,832.5 L537.8,832.2 L538.8,834.6 L539.8,834.2 L540.8,818.2 L541.8,815.9 L542.8,814.6 L543.8,817.9 L544.8,813.1 L545.8,816.8 L546.8,818.1 L547.8,815.9 L548.8,818.6 L549.8,814.7 L550.8,816.1 L551.8,810.8 L552.8,812.3 L553.8,816.7 L554.8,822.2 L555.9,822.7 L556.9,825.3 L557.9,828.1 L558.9,830.4 L559.9,830.3 L560.9,834.8 L561.9,836.2 L562.9,834.7 L563.9,835.5 L564.9,833.6 L565.9,833.8 L566.9,830.1 L567.9,828.6 L568.9,825.4 L569.9,823.0 L570.9,822.2 L571.9,823.1 L572.9,820.9 L573.9,814.8 L574.9,814.0 L575.9,813.8 L576.9,818.8 L577.9,816.9 L578.9,816.4 L579.9,818.2 L580.9,817.2 L581.9,819.3 L582.9,817.8 L583.9,816.6 L584.9,818.5 L585.9,811.2 L586.9,808.6 L587.9,815.0 L588.9,803.8 L589.9,802.9 L590.9,806.1 L592.0,812.8 L593.0,803.6 L594.0,811.9 L595.0,802.8 L596.0,807.2 L597.0,815.7 L598.0,817.2 L599.0,816.2 L600.0,819.7 L601.0,821.4 L602.0,822.9 L603.0,828.5 L604.0,830.7 L605.0,827.1 L606.0,831.2 L607.0,826.9 L608.0,829.7 L609.0,825.2 L610.0,824.2 L610.0,843.9 Z" fill="#7b9bd9"/>
<rect x="426.5" y="804.7" width="183.5" height="1.3" fill="#a8c4f4"/>
</g>
<g fill="none" stroke="#8fa6d8" stroke-width="1" stroke-linecap="round"><rect x="436.5" y="761.3" width="4.6" height="9" rx="2.3"/><path d="M434.4,766.8 a4.4,4.4 0 0 0 8.8,0 M438.8,771.3 v3 M435.8,774.5 h6"/></g>
<text x="452.0" y="771.5" font-size="10.2" fill="#eef2f8">Voiceover 1</text>
<clipPath id="c5"><rect x="951.9" y="666.4" width="37.0" height="86.9" rx="3"/></clipPath>
<g clip-path="url(#c5)">
<rect x="951.9" y="666.4" width="37.0" height="86.9" fill="#13666e"/>
<rect x="951.9" y="710.0" width="37.0" height="43.3" fill="#0c4d55"/>
<path d="M951.9,753.3 C953.8,718.0 963.0,710.0 970.4,710.0 C977.8,710.0 987.0,718.0 988.9,753.3 Z" fill="#13646c"/>
<path d="M951.9,753.3 L951.9,752.9 L952.9,752.4 L953.9,751.7 L954.9,750.3 L955.9,748.7 L956.9,745.9 L957.9,745.2 L958.9,740.7 L959.9,735.1 L960.9,733.4 L961.9,729.6 L962.9,733.9 L963.9,732.1 L964.9,735.2 L965.9,736.3 L966.9,739.6 L967.9,743.5 L968.9,737.8 L969.9,732.1 L970.9,722.5 L971.9,721.1 L972.9,726.9 L973.9,724.8 L974.9,734.6 L975.9,737.5 L976.9,738.8 L977.9,735.8 L978.9,727.4 L979.9,731.5 L980.9,733.0 L981.9,732.0 L982.9,737.7 L983.9,744.3 L984.9,746.5 L985.9,750.0 L986.9,751.5 L987.9,752.6 L988.9,752.9 L988.9,753.3 Z" fill="#3da3b0"/>
<rect x="951.9" y="718.5" width="37.0" height="1.3" fill="#8ae2ea"/>
</g>
<path d="M960.9,675.4 v3.0 M962.8,673.9 v6.0 M964.7,672.4 v9.0 M966.6,670.9 v12.0 M968.5,672.9 v8.0 M970.4,671.4 v11.0 M972.3,673.9 v6.0 M974.2,674.9 v4.0" stroke="#5fb4bf" stroke-width="1"/>
<text x="977.4" y="680.6" font-size="10.2" fill="#eef2f8">...</text>
<clipPath id="c6"><rect x="1007.3" y="666.4" width="56.6" height="86.9" rx="3"/></clipPath>
<g clip-path="url(#c6)">
<rect x="1007.3" y="666.4" width="56.6" height="86.9" fill="#13666e"/>
<rect x="1007.3" y="710.0" width="56.6" height="43.3" fill="#0c4d55"/>
<path d="M1007.3,753.3 C1010.1,718.0 1024.3,710.0 1035.6,710.0 C1046.9,710.0 1061.1,718.0 1063.9,753.3 Z" fill="#13646c"/>
<path d="M1007.3,753.3 L1007.3,752.9 L1008.3,752.6 L1009.3,752.3 L1010.3,751.9 L1011.3,751.5 L1012.4,750.1 L1013.4,749.1 L1014.4,747.2 L1015.4,746.2 L1016.4,743.3 L1017.4,742.7 L1018.4,738.4 L1019.4,736.3 L1020.4,735.8 L1021.5,733.4 L1022.5,731.1 L1023.5,733.5 L1024.5,731.0 L1025.5,729.8 L1026.5,734.2 L1027.5,732.5 L1028.5,735.2 L1029.5,736.8 L1030.5,741.2 L1031.6,743.8 L1032.6,737.8 L1033.6,733.6 L1034.6,731.9 L1035.6,731.2 L1036.6,727.9 L1037.6,722.5 L1038.6,725.2 L1039.6,720.3 L1040.7,725.6 L1041.7,731.5 L1042.7,732.1 L1043.7,737.5 L1044.7,737.7 L1045.7,734.4 L1046.7,733.6 L1047.7,730.4 L1048.7,728.4 L1049.8,727.1 L1050.8,726.5 L1051.8,734.4 L1052.8,734.5 L1053.8,735.9 L1054.8,740.3 L1055.8,742.2 L1056.8,746.2 L1057.8,746.8 L1058.8,749.3 L1059.9,751.0 L1060.9,751.6 L1061.9,752.4 L1062.9,752.8 L1063.9,753.0 L1063.9,753.3 Z" fill="#3da3b0"/>
<rect x="1007.3" y="718.5" width="56.6" height="1.3" fill="#8ae2ea"/>
</g>
<path d="M1016.3,675.4 v3.0 M1018.2,673.9 v6.0 M1020.1,672.4 v9.0 M1022.0,670.9 v12.0 M1023.9,672.9 v8.0 M1025.8,671.4 v11.0 M1027.7,673.9 v6.0 M1029.6,674.9 v4.0" stroke="#5fb4bf" stroke-width="1"/>
<text x="1032.8" y="680.6" font-size="10.2" fill="#eef2f8">High...</text>
<clipPath id="c7"><rect x="1115.1" y="666.2" width="156.7" height="86.8" rx="3"/></clipPath>
<g clip-path="url(#c7)">
<rect x="1115.1" y="666.2" width="156.7" height="86.8" fill="#13666e"/>
<rect x="1115.1" y="710.0" width="156.7" height="43.0" fill="#0c4d55"/>
<path d="M1115.1,753.0 C1122.9,718.0 1162.1,710.0 1193.4,710.0 C1224.8,710.0 1264.0,718.0 1271.8,753.0 Z" fill="#13646c"/>
<path d="M1115.1,753.0 L1115.1,744.4 L1116.1,744.7 L1117.1,743.2 L1118.1,744.8 L1119.1,743.3 L1120.1,743.7 L1121.1,744.5 L1122.1,743.1 L1123.1,744.4 L1124.1,743.1 L1125.1,744.1 L1126.1,744.0 L1127.2,742.8 L1128.2,741.4 L1129.2,743.6 L1130.2,743.2 L1131.2,741.8 L1132.2,740.6 L1133.2,741.7 L1134.2,742.2 L1135.2,740.2 L1136.2,743.2 L1137.2,740.4 L1138.2,742.2 L1139.2,742.7 L1140.2,742.7 L1141.2,741.9 L1142.2,740.1 L1143.2,742.2 L1144.2,740.7 L1145.2,740.4 L1146.2,741.3 L1147.2,740.6 L1148.2,742.3 L1149.3,742.3 L1150.3,741.7 L1151.3,739.9 L1152.3,740.8 L1153.3,741.1 L1154.3,740.1 L1155.3,740.5 L1156.3,741.1 L1157.3,739.1 L1158.3,739.5 L1159.3,741.2 L1160.3,739.9 L1161.3,740.0 L1162.3,738.6 L1163.3,739.2 L1164.3,740.9 L1165.3,738.2 L1166.3,741.5 L1167.3,740.3 L1168.3,739.0 L1169.3,741.4 L1170.3,740.0 L1171.4,741.8 L1172.4,739.4 L1173.4,739.0 L1174.4,739.7 L1175.4,738.6 L1176.4,740.8 L1177.4,739.3 L1178.4,739.8 L1179.4,739.8 L1180.4,740.3 L1181.4,738.9 L1182.4,738.5 L1183.4,740.4 L1184.4,739.7 L1185.4,742.0 L1186.4,739.7 L1187.4,739.9 L1188.4,738.7 L1189.4,739.4 L1190.4,741.5 L1191.4,741.1 L1192.4,740.2 L1193.4,742.6 L1194.5,741.1 L1195.5,742.2 L1196.5,742.5 L1197.5,742.7 L1198.5,740.3 L1199.5,742.6 L1200.5,742.3 L1201.5,741.9 L1202.5,740.3 L1203.5,743.1 L1204.5,741.9 L1205.5,741.7 L1206.5,740.7 L1207.5,741.0 L1208.5,741.0 L1209.5,743.0 L1210.5,742.6 L1211.5,742.9 L1212.5,741.4 L1213.5,741.2 L1214.5,743.8 L1215.5,743.9 L1216.6,743.8 L1217.6,743.9 L1218.6,743.2 L1219.6,743.0 L1220.6,744.1 L1221.6,744.9 L1222.6,743.9 L1223.6,744.1 L1224.6,743.7 L1225.6,742.7 L1226.6,743.6 L1227.6,744.1 L1228.6,744.0 L1229.6,743.9 L1230.6,745.6 L1231.6,743.6 L1232.6,744.0 L1233.6,743.9 L1234.6,744.2 L1235.6,745.3 L1236.6,745.4 L1237.6,746.2 L1238.7,745.1 L1239.7,746.5 L1240.7,746.5 L1241.7,746.3 L1242.7,746.5 L1243.7,746.2 L1244.7,746.9 L1245.7,747.1 L1246.7,746.9 L1247.7,747.1 L1248.7,746.6 L1249.7,747.4 L1250.7,745.8 L1251.7,746.4 L1252.7,747.4 L1253.7,747.3 L1254.7,747.2 L1255.7,747.2 L1256.7,747.7 L1257.7,746.5 L1258.7,746.4 L1259.7,747.4 L1260.8,747.4 L1261.8,748.2 L1262.8,748.2 L1263.8,747.9 L1264.8,748.1 L1265.8,747.2 L1266.8,748.4 L1267.8,748.6 L1268.8,747.3 L1269.8,748.0 L1270.8,748.6 L1271.8,748.1 L1271.8,753.0 Z" fill="#3da3b0"/>
<rect x="1115.1" y="724.9" width="156.7" height="1.3" fill="#8ae2ea"/>
</g>
<path d="M1124.1,675.2 v3.0 M1126.0,673.7 v6.0 M1127.9,672.2 v9.0 M1129.8,670.7 v12.0 M1131.7,672.7 v8.0 M1133.6,671.2 v11.0 M1135.5,673.7 v6.0 M1137.4,674.7 v4.0" stroke="#5fb4bf" stroke-width="1"/>
<text x="1140.6" y="680.4" font-size="10.2" fill="#eef2f8">Time Piece</text>
<rect x="774.1" y="756.9" width="312.9" height="87.3" rx="4" fill="#dcc21c"/>
<clipPath id="c8"><rect x="783.0" y="759.0" width="295.0" height="83.0" rx="1"/></clipPath>
<g clip-path="url(#c8)">
<rect x="783.0" y="759.0" width="295.0" height="83.0" fill="#13666e"/>
<rect x="783.0" y="800.2" width="295.0" height="41.8" fill="#0c4d55"/>

<path d="M783.0,842.0 L783.0,834.7 L784.0,832.5 L785.0,834.3 L786.0,832.4 L787.0,833.7 L788.0,832.9 L789.0,830.3 L790.0,832.4 L791.0,830.6 L792.0,830.9 L793.0,830.5 L794.0,830.0 L795.0,830.8 L796.0,828.0 L797.0,830.5 L798.0,829.6 L799.0,830.2 L800.0,828.8 L801.0,827.9 L802.0,825.3 L803.0,827.3 L804.0,828.2 L805.0,827.2 L806.0,823.3 L807.0,827.5 L808.0,824.3 L809.0,825.2 L810.0,823.4 L811.0,824.8 L812.0,822.5 L813.0,823.2 L814.0,821.9 L815.0,820.1 L816.0,821.6 L817.0,823.9 L818.0,824.0 L819.0,818.2 L820.0,820.7 L821.0,822.3 L822.0,816.9 L823.0,819.0 L824.0,817.6 L825.0,816.2 L826.0,820.0 L827.0,819.1 L828.0,815.0 L829.0,820.1 L830.0,815.0 L831.0,819.7 L832.0,814.8 L833.0,814.3 L834.0,812.0 L835.0,812.4 L836.0,814.8 L837.0,817.0 L838.0,817.0 L839.0,813.5 L840.0,813.3 L841.0,816.8 L842.0,809.1 L843.0,812.2 L844.0,810.1 L845.0,814.1 L846.0,813.6 L847.0,815.4 L848.0,812.0 L849.0,812.4 L850.0,810.5 L851.0,810.6 L852.0,805.7 L853.0,804.8 L854.0,811.6 L855.0,809.0 L856.0,811.0 L857.0,805.5 L858.0,801.9 L859.0,809.7 L860.0,803.3 L861.0,808.0 L862.0,810.8 L863.0,802.1 L864.0,806.5 L865.0,808.1 L866.0,804.7 L867.0,806.7 L868.0,804.3 L869.0,803.5 L870.0,803.5 L871.0,801.1 L872.0,804.8 L873.0,807.5 L874.0,808.0 L875.0,808.2 L876.0,803.8 L877.0,806.1 L878.0,801.6 L879.0,805.4 L880.0,803.6 L881.0,801.1 L882.0,811.3 L883.0,812.2 L884.0,811.2 L885.0,809.1 L886.0,807.6 L887.0,806.3 L888.0,810.6 L889.0,805.0 L890.0,814.7 L891.0,807.1 L892.0,813.4 L893.0,807.5 L894.0,815.7 L895.0,807.5 L896.0,809.8 L897.0,808.1 L898.0,812.1 L899.0,815.9 L900.0,809.5 L901.0,814.3 L902.0,817.6 L903.0,813.6 L904.0,814.8 L905.0,815.3 L906.0,818.2 L907.0,818.7 L908.0,815.4 L909.0,816.7 L910.0,819.5 L911.0,817.4 L912.0,815.6 L913.0,816.0 L914.0,818.0 L915.0,818.9 L916.0,819.4 L917.0,820.6 L918.0,821.1 L919.0,819.6 L920.0,822.1 L921.0,818.3 L922.0,818.7 L923.0,819.6 L924.0,823.6 L925.0,821.7 L926.0,821.5 L927.0,823.8 L928.0,818.7 L929.0,820.2 L930.0,822.0 L931.0,821.0 L932.0,824.2 L933.0,824.3 L934.0,822.8 L935.0,821.8 L936.0,822.6 L937.0,826.3 L938.0,823.2 L939.0,821.8 L940.0,823.0 L941.0,822.2 L942.0,822.2 L943.0,826.3 L944.0,826.1 L945.0,825.0 L946.0,823.1 L947.0,826.3 L948.0,823.7 L949.0,824.4 L950.0,826.2 L951.0,825.8 L952.0,824.5 L953.0,825.5 L954.0,827.9 L955.0,825.6 L956.0,828.7 L957.0,828.1 L958.0,825.7 L959.0,826.4 L960.0,828.8 L961.0,829.0 L962.0,827.9 L963.0,827.1 L964.0,827.9 L965.0,827.1 L966.0,828.1 L967.0,827.9 L968.0,828.9 L969.0,829.9 L970.0,829.8 L971.0,829.8 L972.0,829.8 L973.0,828.8 L974.0,831.0 L975.0,831.8 L976.0,829.6 L977.0,831.3 L978.0,831.0 L979.0,832.1 L980.0,829.9 L981.0,831.8 L982.0,831.9 L983.0,830.4 L984.0,831.5 L985.0,832.3 L986.0,830.5 L987.0,832.1 L988.0,832.4 L989.0,830.7 L990.0,831.3 L991.0,831.6 L992.0,833.1 L993.0,831.6 L994.0,832.4 L995.0,831.8 L996.0,833.2 L997.0,832.2 L998.0,832.3 L999.0,833.5 L1000.0,832.9 L1001.0,832.7 L1002.0,832.2 L1003.0,832.5 L1004.0,833.0 L1005.0,834.7 L1006.0,833.6 L1007.0,833.5 L1008.0,835.1 L1009.0,834.3 L1010.0,833.4 L1011.0,833.4 L1012.0,833.5 L1013.0,835.4 L1014.0,834.4 L1015.0,833.9 L1016.0,834.5 L1017.0,835.3 L1018.0,835.9 L1019.0,834.2 L1020.0,834.4 L1021.0,834.9 L1022.0,835.6 L1023.0,834.7 L1024.0,834.8 L1025.0,835.1 L1026.0,835.4 L1027.0,836.0 L1028.0,836.1 L1029.0,836.1 L1030.0,836.2 L1031.0,835.9 L1032.0,836.7 L1033.0,835.7 L1034.0,836.4 L1035.0,836.8 L1036.0,836.7 L1037.0,836.6 L1038.0,836.6 L1039.0,836.1 L1040.0,837.2 L1041.0,837.1 L1042.0,837.0 L1043.0,837.3 L1044.0,836.4 L1045.0,837.5 L1046.0,837.6 L1047.0,836.9 L1048.0,836.7 L1049.0,836.7 L1050.0,837.1 L1051.0,837.5 L1052.0,836.8 L1053.0,837.0 L1054.0,837.4 L1055.0,837.4 L1056.0,836.9 L1057.0,836.9 L1058.0,837.1 L1059.0,838.2 L1060.0,837.9 L1061.0,837.9 L1062.0,838.2 L1063.0,837.6 L1064.0,838.5 L1065.0,837.5 L1066.0,837.9 L1067.0,837.9 L1068.0,838.2 L1069.0,837.7 L1070.0,838.1 L1071.0,837.8 L1072.0,837.8 L1073.0,838.1 L1074.0,837.9 L1075.0,838.4 L1076.0,838.6 L1077.0,838.1 L1078.0,838.5 L1078.0,842.0 Z" fill="#3da3b0"/>
<rect x="783.0" y="809.0" width="295.0" height="1.3" fill="#8ae2ea"/>
</g>
<path d="M791.0,768.0 v4.0 M793.1,766.0 v8.0 M795.2,764.0 v12.0 M797.3,762.0 v16.0 M799.4,765.0 v10.0 M801.5,763.0 v14.0 M803.6,766.0 v8.0 M805.7,767.5 v5.0" stroke="#e6f4f6" stroke-width="1.3"/>
<text x="808.5" y="773.2" font-size="10.2" fill="#eef2f8">Whoosh Hit</text>
<path d="M778.6,786 V815 M1082.6,786 V815" stroke="#3a3410" stroke-width="1.6" stroke-linecap="round"/>
<clipPath id="c9"><rect x="1180.2" y="757.4" width="102.6" height="86.2" rx="3"/></clipPath>
<g clip-path="url(#c9)">
<rect x="1180.2" y="757.4" width="102.6" height="86.2" fill="#397a39"/>
<rect x="1180.2" y="799.8" width="102.6" height="43.8" fill="#2a6a2a"/>

<path d="M1180.2,843.6 L1180.2,815.9 L1181.2,816.7 L1182.2,818.6 L1183.2,812.5 L1184.2,819.7 L1185.2,815.6 L1186.2,812.3 L1187.2,819.1 L1188.2,815.1 L1189.3,814.6 L1190.3,819.5 L1191.3,816.6 L1192.3,813.9 L1193.3,816.0 L1194.3,813.7 L1195.3,818.5 L1196.3,817.8 L1197.3,818.9 L1198.3,815.5 L1199.3,812.0 L1200.3,814.8 L1201.3,813.3 L1202.3,816.6 L1203.3,813.5 L1204.3,818.9 L1205.3,817.4 L1206.4,814.1 L1207.4,813.7 L1208.4,816.3 L1209.4,819.1 L1210.4,817.6 L1211.4,818.0 L1212.4,817.4 L1213.4,813.0 L1214.4,818.1 L1215.4,812.4 L1216.4,812.4 L1217.4,819.3 L1218.4,816.6 L1219.4,815.7 L1220.4,819.6 L1221.4,816.2 L1222.4,812.2 L1223.5,818.9 L1224.5,814.8 L1225.5,818.8 L1226.5,814.9 L1227.5,812.3 L1228.5,818.1 L1229.5,819.7 L1230.5,819.1 L1231.5,815.3 L1232.5,819.7 L1233.5,819.1 L1234.5,815.6 L1235.5,812.1 L1236.5,816.3 L1237.5,838.0 L1238.5,837.6 L1239.5,838.6 L1240.6,837.8 L1241.6,838.5 L1242.6,837.8 L1243.6,837.3 L1244.6,838.8 L1245.6,838.1 L1246.6,838.0 L1247.6,838.8 L1248.6,838.6 L1249.6,837.5 L1250.6,837.6 L1251.6,839.0 L1252.6,838.1 L1253.6,837.8 L1254.6,838.9 L1255.6,838.4 L1256.6,839.3 L1257.7,838.8 L1258.7,838.4 L1259.7,838.6 L1260.7,838.3 L1261.7,839.4 L1262.7,839.0 L1263.7,838.3 L1264.7,838.8 L1265.7,839.0 L1266.7,839.1 L1267.7,838.3 L1268.7,838.9 L1269.7,839.7 L1270.7,838.7 L1271.7,839.4 L1272.7,839.3 L1273.7,839.6 L1274.8,839.4 L1275.8,839.6 L1276.8,839.9 L1277.8,839.2 L1278.8,839.9 L1279.8,839.1 L1280.8,840.1 L1281.8,839.2 L1282.8,839.2 L1282.8,843.6 Z" fill="#7ab87a"/>
<rect x="1180.2" y="811.7" width="102.6" height="1.3" fill="#d8f0d8"/>
</g>
<path d="M1193.2,773.4 V761.4 l6,-2 v3 l-4.5,1.5 V773.4" fill="none" stroke="#7cc07c" stroke-width="1.6"/><ellipse cx="1190.7" cy="773.9" rx="3" ry="2.3" fill="#7cc07c"/>
<text x="1205.7" y="771.6" font-size="10.2" fill="#eef2f8">Inertia</text>
<clipPath id="c10"><rect x="306.4" y="847.5" width="236.8" height="62.5" rx="0"/></clipPath>
<g clip-path="url(#c10)">
<rect x="306.4" y="847.5" width="236.8" height="62.5" fill="#13666e"/>
<rect x="306.4" y="890.2" width="236.8" height="19.8" fill="#0c4d55"/>
<path d="M306.4,910.0 C318.2,898.0 377.4,890.0 424.8,890.0 C472.2,890.0 531.4,898.0 543.2,910.0 Z" fill="#166c74"/>
<path d="M306.4,910.0 L306.4,910.0 L307.4,910.0 L308.4,910.0 L309.4,910.0 L310.4,910.0 L311.4,910.0 L312.4,910.0 L313.4,910.0 L314.4,910.0 L315.4,910.0 L316.4,910.0 L317.4,910.0 L318.4,910.0 L319.4,910.0 L320.4,910.0 L321.5,910.0 L322.5,910.0 L323.5,910.0 L324.5,910.0 L325.5,910.0 L326.5,910.0 L327.5,910.0 L328.5,910.0 L329.5,910.0 L330.5,910.0 L331.5,910.0 L332.5,910.0 L333.5,910.0 L334.5,910.0 L335.5,910.0 L336.5,910.0 L337.5,910.0 L338.5,910.0 L339.5,910.0 L340.5,910.0 L341.5,910.0 L342.5,910.0 L343.5,910.0 L344.5,910.0 L345.5,910.0 L346.5,910.0 L347.5,910.0 L348.5,910.0 L349.5,910.0 L350.5,910.0 L351.6,910.0 L352.6,910.0 L353.6,910.0 L354.6,910.0 L355.6,910.0 L356.6,910.0 L357.6,910.0 L358.6,910.0 L359.6,910.0 L360.6,910.0 L361.6,910.0 L362.6,910.0 L363.6,910.0 L364.6,910.0 L365.6,910.0 L366.6,910.0 L367.6,910.0 L368.6,910.0 L369.6,910.0 L370.6,910.0 L371.6,910.0 L372.6,910.0 L373.6,910.0 L374.6,910.0 L375.6,910.0 L376.6,910.0 L377.6,910.0 L378.6,910.0 L379.6,910.0 L380.7,910.0 L381.7,910.0 L382.7,910.0 L383.7,910.0 L384.7,910.0 L385.7,910.0 L386.7,910.0 L387.7,910.0 L388.7,910.0 L389.7,910.0 L390.7,910.0 L391.7,910.0 L392.7,910.0 L393.7,910.0 L394.7,910.0 L395.7,910.0 L396.7,910.0 L397.7,910.0 L398.7,910.0 L399.7,910.0 L400.7,910.0 L401.7,910.0 L402.7,910.0 L403.7,910.0 L404.7,910.0 L405.7,910.0 L406.7,910.0 L407.7,910.0 L408.7,910.0 L409.7,910.0 L410.8,910.0 L411.8,910.0 L412.8,910.0 L413.8,910.0 L414.8,910.0 L415.8,910.0 L416.8,910.0 L417.8,910.0 L418.8,910.0 L419.8,910.0 L420.8,910.0 L421.8,910.0 L422.8,910.0 L423.8,910.0 L424.8,910.0 L425.8,910.0 L426.8,910.0 L427.8,910.0 L428.8,910.0 L429.8,910.0 L430.8,910.0 L431.8,910.0 L432.8,910.0 L433.8,910.0 L434.8,910.0 L435.8,910.0 L436.8,910.0 L437.8,910.0 L438.8,910.0 L439.9,910.0 L440.9,910.0 L441.9,910.0 L442.9,910.0 L443.9,910.0 L444.9,910.0 L445.9,910.0 L446.9,910.0 L447.9,910.0 L448.9,910.0 L449.9,910.0 L450.9,910.0 L451.9,910.0 L452.9,910.0 L453.9,910.0 L454.9,910.0 L455.9,910.0 L456.9,910.0 L457.9,910.0 L458.9,910.0 L459.9,910.0 L460.9,910.0 L461.9,910.0 L462.9,910.0 L463.9,910.0 L464.9,910.0 L465.9,910.0 L466.9,910.0 L467.9,910.0 L468.9,910.0 L470.0,910.0 L471.0,910.0 L472.0,910.0 L473.0,910.0 L474.0,910.0 L475.0,910.0 L476.0,910.0 L477.0,910.0 L478.0,910.0 L479.0,910.0 L480.0,910.0 L481.0,910.0 L482.0,910.0 L483.0,910.0 L484.0,910.0 L485.0,910.0 L486.0,910.0 L487.0,910.0 L488.0,910.0 L489.0,910.0 L490.0,910.0 L491.0,910.0 L492.0,910.0 L493.0,910.0 L494.0,910.0 L495.0,910.0 L496.0,910.0 L497.0,910.0 L498.0,910.0 L499.1,910.0 L500.1,910.0 L501.1,910.0 L502.1,910.0 L503.1,910.0 L504.1,910.0 L505.1,910.0 L506.1,910.0 L507.1,910.0 L508.1,910.0 L509.1,910.0 L510.1,910.0 L511.1,910.0 L512.1,910.0 L513.1,910.0 L514.1,910.0 L515.1,910.0 L516.1,910.0 L517.1,910.0 L518.1,910.0 L519.1,910.0 L520.1,910.0 L521.1,910.0 L522.1,910.0 L523.1,910.0 L524.1,910.0 L525.1,910.0 L526.1,910.0 L527.1,910.0 L528.1,910.0 L529.2,910.0 L530.2,910.0 L531.2,910.0 L532.2,910.0 L533.2,910.0 L534.2,910.0 L535.2,910.0 L536.2,910.0 L537.2,910.0 L538.2,910.0 L539.2,910.0 L540.2,910.0 L541.2,910.0 L542.2,910.0 L543.2,910.0 L543.2,910.0 Z" fill="#3da3b0"/>
<rect x="306.4" y="899.0" width="236.8" height="1.3" fill="#8ae2ea"/>
</g>
<path d="M315.4,856.5 v3.0 M317.3,855.0 v6.0 M319.2,853.5 v9.0 M321.1,852.0 v12.0 M323.0,854.0 v8.0 M324.9,852.5 v11.0 M326.8,855.0 v6.0 M328.7,856.0 v4.0" stroke="#5fb4bf" stroke-width="1"/>
<text x="331.9" y="861.7" font-size="10.2" fill="#eef2f8">Night Winds</text>
<path d="M901.2,668 V910" stroke="#d8d8dc" stroke-width="1.2"/>
<path d="M896.5,643.3 H907.5 a2,2 0 0 1 2,2 V664 L902,670.5 L894.5,664 V645.3 a2,2 0 0 1 2,-2 Z" fill="#8a8a8e" stroke="#b0b0b4" stroke-width="0.8"/>
<rect x="1413.6" y="754.1" width="59.2" height="78.7" rx="10" fill="#262629"/>
<rect x="1428" y="759.5" width="32" height="3.6" rx="1.8" fill="#58585c"/>
<circle cx="1443.8" cy="797.7" r="17.2" fill="#080808"/>
<path d="M1457.8,797.7 L1459.8,797.7 M1455.9,804.7 L1457.7,805.7 M1450.8,809.8 L1451.8,811.6 M1443.8,811.7 L1443.8,813.7 M1436.8,809.8 L1435.8,811.6 M1431.7,804.7 L1429.9,805.7 M1429.8,797.7 L1427.8,797.7 M1431.7,790.7 L1429.9,789.7 M1436.8,785.6 L1435.8,783.8 M1443.8,783.7 L1443.8,781.7 M1450.8,785.6 L1451.8,783.8 M1455.9,790.7 L1457.7,789.7" stroke="#6a6a6e" stroke-width="0.9"/>
<path d="M1429.5,797.7 H1433" stroke="#c8c8cc" stroke-width="1.4"/>
<path d="M1440.6,791 H1447 V801.5 L1443.8,805 L1440.6,801.5 Z" fill="#fff"/>
</g><!--/TL-->
<!--UI-->
<g id="ui">
  <!-- status -->
  <g fill="#fff" stroke="#fff" stroke-width="0.45" font-size="13.3">
  <text x="303.7" y="110.2" textLength="44" lengthAdjust="spacingAndGlyphs">9:41 AM</text>
  <text x="358.2" y="110.2" textLength="56.8" lengthAdjust="spacingAndGlyphs">Wed Apr 1</text>
  <text x="1403.4" y="110" textLength="32.2" lengthAdjust="spacingAndGlyphs">100%</text>
  </g>
  <g fill="none" stroke="#fff" stroke-linecap="round">
    <path d="M1387.5,104.2 A8.6,8.6 0 0 1 1398.5,104.2" stroke-width="1.9"/>
    <path d="M1389.8,106.6 A5.4,5.4 0 0 1 1396.2,106.6" stroke-width="1.9"/>
  </g>
  <circle cx="1393" cy="108.6" r="1.4" fill="#fff"/>
  <rect x="1440" y="99.8" width="20.8" height="10.6" rx="3" fill="none" stroke="#7a7a7e" stroke-width="1"/>
  <rect x="1441.8" y="101.6" width="17.2" height="7" rx="1.5" fill="#fff"/>
  <path d="M1462,103.3 a2,2 0 0 1 0,4" fill="#7a7a7e"/>
  <!-- nav -->
  <path d="M316.5,133.2 L308.2,140.6 L316.5,148" fill="none" stroke="#e8e8ec" stroke-width="1.9" stroke-linecap="round" stroke-linejoin="round"/>
  <text x="336" y="145.9" font-size="15.4" font-weight="bold" fill="#fff" textLength="220.3" lengthAdjust="spacingAndGlyphs">Whirling Documentary Final Edit</text>
  <circle cx="570.7" cy="141" r="7.2" fill="#4a4a4e"/>
  <path d="M567.4,139.6 L570.7,142.8 L574,139.6" fill="none" stroke="#c8c8cc" stroke-width="1.4" stroke-linecap="round" stroke-linejoin="round"/>
  <g fill="none" stroke="#dcdce0" stroke-width="1.5" stroke-linecap="round" stroke-linejoin="round">
    <!-- import -->
    <path d="M813.5,136.2 H812.5 a3,3 0 0 0 -3,3 V147 a3,3 0 0 0 3,3 H822.5 a3,3 0 0 0 3,-3 V139.2 a3,3 0 0 0 -3,-3 H821.5"/>
    <path d="M817.5,130.8 V143.5 M813.8,139.8 L817.5,143.5 L821.2,139.8"/>
    <!-- cameras -->
    <path d="M859.5,146 H859 a3,3 0 0 1 -3,-3 V135.5 a3,3 0 0 1 3,-3 H869 a3,3 0 0 1 3,3 V136"/>
    <rect x="860.3" y="136.2" width="16" height="14.2" rx="3"/>
    <path d="M876.5,141.5 L882.2,138 V149 L876.5,145.5"/>
    <!-- mic -->
    <rect x="907" y="130.8" width="6.6" height="13" rx="3.3"/>
    <path d="M904.3,138.5 a6,6 0 0 0 12,0"/>
    <path d="M910.3,145 V150.3 M906,150.6 H914.6"/>
    <!-- pencil circle -->
    <circle cx="947" cy="141" r="9.2"/>
    <path d="M943.6,148.5 L947,134.8 L950.4,148.5 M945.4,144.5 H948.6"/>
    <!-- undo -->
    <circle cx="1221.9" cy="140.6" r="9.2"/>
    <path d="M1218.6,139 H1222.2 a3,3 0 0 1 0,6 H1221 M1220.6,136.8 L1218.4,139 L1220.6,141.2" stroke-width="1.4"/>
  </g>
  <g fill="none" stroke="#5c5c60" stroke-width="1.5" stroke-linecap="round" stroke-linejoin="round">
    <circle cx="1270.3" cy="140.6" r="9.2"/>
    <path d="M1273.5,139 H1270.5 a3,3 0 1 0 0.5,6 M1271.6,136.8 L1273.8,139 L1271.6,141.2" stroke-width="1.4"/>
  </g>
  <g fill="none" stroke="#dcdce0" stroke-width="1.5" stroke-linecap="round">
    <rect x="1301.5" y="132.8" width="21" height="16.4" rx="2"/>
    <path d="M1304.8,136.8 H1311.5 M1304.8,140.8 H1309.5 M1304.8,144.8 H1311.5" stroke-width="1.3"/>
  </g>
  <circle cx="1318" cy="137.3" r="2.4" fill="#dcdce0"/>
  <circle cx="1318" cy="144.8" r="2.4" fill="#dcdce0"/>
  <rect x="1333.3" y="126.7" width="38.6" height="28.2" rx="5" fill="#6b7cf4"/>
  <rect x="1341.5" y="133" width="21" height="16.2" rx="2.5" fill="none" stroke="#fff" stroke-width="1.8"/>
  <circle cx="1346.8" cy="138" r="2.1" fill="#fff"/>
  <path d="M1342.4,148.5 L1342.4,146 L1346.5,142.3 L1349.5,145 L1355.3,140.8 L1361.6,146.5 L1361.6,148.5 Z" fill="#fff" stroke="#fff" stroke-width="0.8" stroke-linejoin="round"/>
  <rect x="1381" y="127" width="38" height="28" rx="5" fill="#353538"/>
  <g fill="none" stroke="#dcdce0" stroke-width="1.4">
    <path d="M1394.3,143.2 a6.8,6.8 0 1 1 8.2,-6.7"/>
    <rect x="1395" y="136.5" width="14.5" height="14" rx="2" fill="#353538"/>
  </g>
  <path d="M1402.2,139.2 l1.3,2.8 3,0.3 -2.3,2 0.7,3 -2.7,-1.5 -2.7,1.5 0.7,-3 -2.3,-2 3,-0.3 z" fill="#dcdce0"/>
  <circle cx="1410.3" cy="147.8" r="3.2" fill="#7e7ef2"/>
  <circle cx="1447.6" cy="140.6" r="9.4" fill="none" stroke="#dcdce0" stroke-width="1.5"/>
  <circle cx="1443.4" cy="140.6" r="1.3" fill="#dcdce0"/><circle cx="1447.6" cy="140.6" r="1.3" fill="#dcdce0"/><circle cx="1451.8" cy="140.6" r="1.3" fill="#dcdce0"/>

  <!-- media header -->
  <path d="M1002,172.5 V197 M1005.6,172.5 V197" stroke="#3c3c40" stroke-width="1.4"/>
  <text x="1012.8" y="181" font-size="12.6" font-weight="bold" fill="#fff" textLength="84.6" lengthAdjust="spacingAndGlyphs">Project Media</text>
  <text x="1012.8" y="196" font-size="11.6" fill="#8e8e93" textLength="44.9" lengthAdjust="spacingAndGlyphs">26 Items</text>
  <circle cx="1347.8" cy="184" r="13.6" fill="#2c2c2f"/>
  <circle cx="1346.6" cy="182.8" r="4.8" fill="none" stroke="#dcdce0" stroke-width="1.5"/>
  <path d="M1350,186.3 L1353.2,189.5" stroke="#dcdce0" stroke-width="1.6" stroke-linecap="round"/>
  <rect x="1369.4" y="170.4" width="57.9" height="27.4" rx="13.7" fill="#2c2c2f"/>
  <text x="1379.6" y="189.2" font-size="13.6" fill="#f2f2f6" textLength="37.1" lengthAdjust="spacingAndGlyphs">Select</text>
  <circle cx="1448.4" cy="184" r="13.6" fill="#2c2c2f"/>
  <circle cx="1443.2" cy="184" r="1.6" fill="#e0e0e4"/><circle cx="1448.4" cy="184" r="1.6" fill="#e0e0e4"/><circle cx="1453.6" cy="184" r="1.6" fill="#e0e0e4"/>

  <!-- viewer controls -->
  <g fill="none" stroke="#9c9ca0" stroke-width="1.3" stroke-linejoin="round">
    <path d="M317.5,546 V556 M327.3,546.2 L319.3,551 L327.3,555.8 Z"/>
    <path d="M405.6,546 V556 M395.2,546.2 L403.2,551 L395.2,555.8 Z"/>
  </g>
  <path d="M355,542.5 Q354,541.5 355.5,541.8 L370,549.8 Q371.2,550.7 370,551.6 L355.5,559.6 Q354,560 354.5,558.6 Z" fill="#fff"/>
  <rect x="592.3" y="537.4" width="96.5" height="26.8" rx="4" fill="#000"/>
  <text x="602.8" y="556" font-size="14.5" fill="#9a9a9e" textLength="75.6" lengthAdjust="spacingAndGlyphs">00:<tspan fill="#fff">00:16</tspan>:08</text>
  <rect x="874.7" y="537.4" width="57.3" height="27.2" rx="4" fill="#2a2a2d"/>
  <text x="889.5" y="556.1" font-size="14" fill="#fff" textLength="14.5" lengthAdjust="spacingAndGlyphs">42</text>
  <text x="916.8" y="556.1" font-size="14" fill="#9a9a9e">%</text>
  <circle cx="951.7" cy="550.6" r="1.8" fill="#fff"/><circle cx="958.6" cy="550.6" r="1.8" fill="#fff"/><circle cx="965.5" cy="550.6" r="1.8" fill="#fff"/>
  <path d="M870,584.2 H896 M870,588 H896" stroke="#48484c" stroke-width="1.5"/>

  <!-- timeline header -->
  <text x="303.8" y="613" font-size="13.4" font-weight="bold" fill="#fff" textLength="105.6" lengthAdjust="spacingAndGlyphs">WD_Intro_C2_05</text>
  <text x="303.8" y="632" font-size="13.4" fill="#9a9a9e" textLength="214.4" lengthAdjust="spacingAndGlyphs">00:27 • 3840 × 2160 • HDR • 30 fps</text>
  <rect x="760" y="604.2" width="244.2" height="27.6" rx="7" fill="#2c2c30"/>
  <rect x="763" y="606" width="76.6" height="24" rx="6" fill="#5b5b5f"/>
  <path d="M923.8,611 V625" stroke="#3e3e42" stroke-width="1"/>
  <g fill="#fff" font-size="12.8">
  <text x="791.3" y="622.6" textLength="20" lengthAdjust="spacingAndGlyphs">Clip</text>
  <text x="866.4" y="622.6" textLength="32.1" lengthAdjust="spacingAndGlyphs">Range</text>
  <text x="951" y="622.6" textLength="26.4" lengthAdjust="spacingAndGlyphs">Edge</text>
  </g>
  <g fill="none" stroke="#7b7ef0" stroke-width="1.5" stroke-linecap="round">
    <rect x="1285.5" y="614.2" width="11.5" height="8.2" rx="2.5"/>
    <rect x="1299.5" y="614.2" width="11.5" height="8.2" rx="2.5"/>
    <path d="M1298.2,606 V609.5 M1298.2,626 V629.5 M1290.5,608.5 L1292.5,610.8 M1306,608.5 L1304,610.8 M1290.5,627.5 L1292.5,625.3 M1306,627.5 L1304,625.3" stroke-width="1.3"/>
  </g>
  <g fill="none" stroke="#dcdce0" stroke-width="1.4">
    <path d="M1334.5,621 a3,3 0 0 1 -3,-3 V611 a3,3 0 0 1 3,-3 H1346 a3,3 0 0 1 3,3" stroke-dasharray="2.2 1.6"/>
    <rect x="1336.5" y="613" width="18.5" height="14" rx="3"/>
  </g>
  <path d="M1343,617.5 L1340.5,620 L1343,622.5 Z M1348.5,617.5 L1351,620 L1348.5,622.5 Z" fill="#dcdce0"/>
  <rect x="1370" y="604.5" width="57" height="26.2" rx="13.1" fill="#2c2c30"/>
  <text x="1379.5" y="622.6" font-size="13.2" fill="#f2f2f6" textLength="37.5" lengthAdjust="spacingAndGlyphs">Select</text>
  <circle cx="1448.6" cy="617.6" r="13" fill="#2c2c30"/>
  <circle cx="1443.6" cy="617.6" r="1.6" fill="#e0e0e4"/><circle cx="1448.6" cy="617.6" r="1.6" fill="#e0e0e4"/><circle cx="1453.6" cy="617.6" r="1.6" fill="#e0e0e4"/>

  <!-- bottom bar -->
  <g fill="#2c2c2e">
    <rect x="303.8" y="918.3" width="81.9" height="26.6" rx="5"/>
    <rect x="392.9" y="918.3" width="86" height="26.6" rx="5"/>
    <rect x="486.2" y="918.3" width="87.9" height="26.6" rx="5"/>
    <rect x="582" y="918.3" width="94.7" height="26.6" rx="5"/>
  </g>
  <g fill="#f0f0f4" font-size="13.2">
    <text x="333.4" y="936.4" textLength="42.6" lengthAdjust="spacingAndGlyphs">Inspect</text>
    <text x="426.6" y="936.4" textLength="42.6" lengthAdjust="spacingAndGlyphs">Volume</text>
    <text x="517.4" y="936.4" textLength="47.9" lengthAdjust="spacingAndGlyphs">Animate</text>
    <text x="614.4" y="936.4" textLength="53.2" lengthAdjust="spacingAndGlyphs">Multicam</text>
  </g>
  <!-- inspect icon -->
  <rect x="314.2" y="926" width="12.6" height="5.6" rx="2.8" fill="none" stroke="#f0f0f4" stroke-width="1.2"/>
  <circle cx="317" cy="928.8" r="2" fill="#f0f0f4"/>
  <rect x="313.6" y="932.6" width="13.8" height="6.2" rx="3.1" fill="#f0f0f4"/>
  <circle cx="323.6" cy="935.7" r="2" fill="#2c2c2e"/>
  <g fill="none" stroke="#e0e0e4" stroke-width="1.3" stroke-linejoin="round" stroke-linecap="round">
    <path d="M404,929.5 H407 L411.5,926.5 V938 L407,935 H404 Z"/>
    <path d="M414.3,929.8 a3.5,3.5 0 0 1 0,5 M417.2,927.8 a6.5,6.5 0 0 1 0,9"/>
    <path d="M506.5,924.8 L511.5,931.8 L506.5,938.8 L501.5,931.8 Z"/>
    <path d="M503,925 L498.2,931.8 L503,938.6" stroke-width="1.1"/>
    <path d="M500,925.5 L495.6,931.8 L500,938.1" stroke-width="0.9" stroke="#8a8a8e"/>
    <rect x="592.6" y="925.8" width="6.6" height="5.4" rx="1.5"/>
    <rect x="601" y="925.8" width="6.6" height="5.4" rx="1.5"/>
    <rect x="592.6" y="932.7" width="6.6" height="5.4" rx="1.5"/>
    <rect x="601" y="932.7" width="6.6" height="5.4" rx="1.5"/>
  </g>
  <g fill="none" stroke="#c8c8cc" stroke-width="1.3" stroke-linejoin="round" stroke-linecap="round">
    <!-- trash -->
    <path d="M1296,924.2 H1313 M1301,924 V922.2 a1,1 0 0 1 1,-1 H1307 a1,1 0 0 1 1,1 V924 M1297.8,924.5 L1299,940.5 a1.5,1.5 0 0 0 1.5,1.5 H1308.5 a1.5,1.5 0 0 0 1.5,-1.5 L1311.2,924.5 M1302,927.5 V939 M1304.5,927.5 V939 M1307,927.5 V939"/>
    <!-- scissors/blade -->
    <path d="M1342,927 H1340 a2.5,2.5 0 0 0 -2.5,2.5 V940 H1345.5 M1356,927 H1358 a2.5,2.5 0 0 1 2.5,2.5 V940 H1352.5"/>
    <circle cx="1344.6" cy="922.6" r="2.4"/><circle cx="1353.6" cy="922.6" r="2.4"/>
    <path d="M1345.8,924.8 L1353,938 M1352.4,924.8 L1345.2,938 M1349,929 V943.6"/>
    <!-- split 1 -->
    <path d="M1396.5,920 V943.6"/>
    <path d="M1393,924.5 H1387.5 a2.5,2.5 0 0 0 -2.5,2.5 V937 a2.5,2.5 0 0 0 2.5,2.5 H1393" stroke-dasharray="2.2 1.8"/>
    <path d="M1399.5,924.5 H1405 a2.5,2.5 0 0 1 2.5,2.5 V937 a2.5,2.5 0 0 1 -2.5,2.5 H1399.5"/>
    <path d="M1387.5,932 H1394 M1391.3,929.3 L1394,932 L1391.3,934.7"/>
    <!-- split 2 -->
    <path d="M1442,920 V943.6"/>
    <path d="M1439,924.5 H1433.5 a2.5,2.5 0 0 0 -2.5,2.5 V937 a2.5,2.5 0 0 0 2.5,2.5 H1439"/>
    <path d="M1445,924.5 H1450.5 a2.5,2.5 0 0 1 2.5,2.5 V937 a2.5,2.5 0 0 1 -2.5,2.5 H1445" stroke-dasharray="2.2 1.8"/>
    <path d="M1452,932 H1444.5 M1447.2,929.3 L1444.5,932 L1447.2,934.7"/>
  </g>
  <path d="M1461,976.4 A11.4,11.4 0 0 0 1471.4,966" fill="none" stroke="#fff" stroke-width="2.8" stroke-linecap="round"/>
</g>

</svg>
</body></html>
